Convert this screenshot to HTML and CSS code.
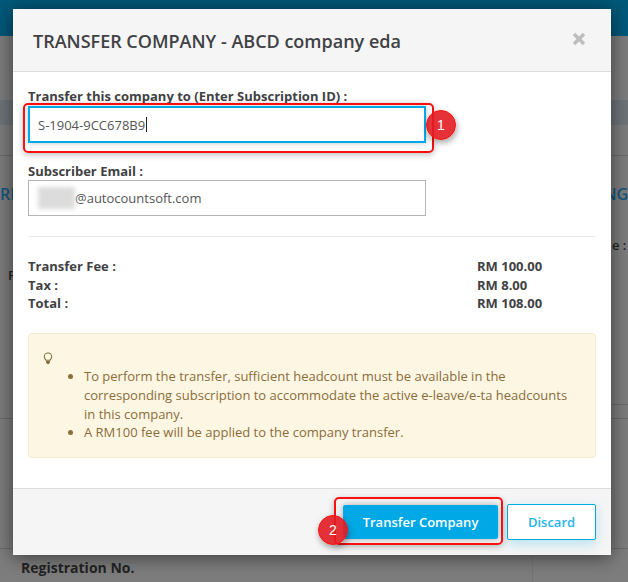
FILE: index.html
```html
<!DOCTYPE html>
<html lang="en">
<head>
  <meta charset="utf-8" />
  <title>Transfer Company</title>
  <link rel="stylesheet" href="styles.css">
</head>
<body>
  <div id="page">
    <div id="top_bar"></div>
    <div id="band"></div>
    <div id="rule1"></div>
    <span id="bg_r">RI</span>
    <span id="bg_ng">NG</span>
    <span id="bg_e">e :</span>
    <span id="bg_f">F</span>
    <div id="rule2"></div>
    <div id="rule2_right"></div>
    <div id="rule3"></div>
    <div id="col_line"></div>
    <span id="bg_reg">Registration No.</span>
  </div>

  <div id="modal">
    <header>
      <h1>TRANSFER COMPANY - ABCD company eda</h1>
      <svg id="close" width="14" height="14" viewBox="0 0 14 14"><path d="M2 2l10 10M12 2L2 12" stroke="#bdbdbd" stroke-width="3.4" /></svg>
    </header>

    <div id="modal-body">
      <label class="field-label">Transfer this company to (Enter Subscription ID) :</label>
      <div class="input focus">S-1904-9CC678B9<i class="caret"></i></div>

      <label class="field-label second">Subscriber Email :</label>
      <div class="input"><span class="blur"></span>@autocountsoft.com</div>

      <hr />

      <div class="fee"><b>Transfer Fee :</b><b class="amount">RM 100.00</b></div>
      <div class="fee"><b>Tax :</b><b class="amount">RM 8.00</b></div>
      <div class="fee"><b>Total :</b><b class="amount">RM 108.00</b></div>

      <div class="note">
        <svg class="bulb" width="10" height="13" viewBox="0 0 10 13">
          <path d="M5 1a3.7 3.7 0 0 0-3.7 3.7c0 1.5 1 2.3 1.6 3.5h4.2c.6-1.2 1.6-2 1.6-3.5A3.7 3.7 0 0 0 5 1z" fill="#fff8e6" stroke="#8a6d3b" stroke-width="1.1" />
          <path d="M3.1 9h3.8v1.6l-1 1.4H4.1l-1-1.4z" fill="#8a6d3b" />
        </svg>
        <ul>
          <li>To perform the transfer, sufficient headcount must be available in the corresponding subscription to accommodate the active e-leave/e-ta headcounts in this company.</li>
          <li>A RM100 fee will be applied to the company transfer.</li>
        </ul>
      </div>
    </div>

    <footer>
      <button class="btn primary">Transfer Company</button>
      <button class="btn outline">Discard</button>
    </footer>
  </div>

  <div class="callout" id="callout1"></div>
  <div class="callout" id="callout2"></div>
  <div class="badge" id="badge1">1</div>
  <div class="badge" id="badge2">2</div>
</body>
</html>
```

FILE: styles.css
```css
html, body { margin: 0; padding: 0; height: 582px; overflow: hidden; font-family: "Open Sans", "Noto Sans", sans-serif; font-size: 13px; color: #3f3f3f; }
body { background: #7d7d7d; position: relative; }
h1 { margin: 0; font-size: 18px; font-weight: 600; line-height: 24px; color: #3f4144; }
b { font-weight: 700; }

/* page behind the overlay */
#page { height: 582px; display: flex; flex-direction: column; }
#top_bar { height: 36px; background: #00597a; }
#band { height: 25px; margin-top: 64px; background: #6f7479; }
#rule1 { height: 1px; margin-top: 30px; background: #6b6b6b; }
#rule2 { height: 1px; margin-top: 262px; background: #6b6b6b; }
#rule3 { height: 1px; margin-top: 129px; background: #6b6b6b; }
#rule2_right { position: absolute; left: 611px; top: 404px; width: 17px; height: 1px; background: #6b6b6b; }
#col_line { position: absolute; left: 532px; top: 548px; width: 1px; height: 34px; background: #757575; }
#bg_r, #bg_ng, #bg_e, #bg_f, #bg_reg { position: absolute; font-weight: 600; }
#bg_r { left: 0; top: 183px; font-size: 16px; color: #14577f; }
#bg_ng { left: 604px; top: 183px; font-size: 16px; color: #14577f; }
#bg_e { left: 612px; top: 236px; color: #222; }
#bg_f { left: 8px; top: 266px; color: #222; }
#bg_reg { left: 21px; top: 558px; font-size: 14px; font-weight: 700; line-height: 20px; color: #232323; }

/* dialog */
#modal { position: absolute; left: 13px; top: 9px; width: 598px; height: 546px; background: #fff; display: flex; flex-direction: column; box-shadow: 0 2px 18px rgba(0,0,0,.55); }
#modal header { height: 63px; box-sizing: border-box; background: #f5f5f5; border-bottom: 1px solid #dcdcdc; padding: 2px 25px 0 20px; display: flex; align-items: center; justify-content: space-between; }
#close { margin-top: -5px; }
#modal-body { flex: 1; padding: 15px 15px 0; }
.field-label { display: block; font-weight: 700; line-height: 18px; color: #3f4144; }
.field-label.second { margin-top: 19px; }
.input { width: 398px; height: 36px; box-sizing: border-box; border: 1px solid #b5b5b5; padding-left: 9px; color: #555; display: flex; align-items: center; }
.input.focus { height: 37px; margin-top: 1px; border: 2px solid #00a9e6; padding-left: 8px; box-shadow: 0 0 6px rgba(0,0,0,.25); }
.caret { width: 1px; height: 15px; background: #222; margin-left: 1px; }
.blur { width: 37px; height: 22px; background: #dcdcdc; filter: blur(2px); }
hr { border: 0; border-top: 1px solid #eaeaea; margin: 20px 0; }
.fee { display: flex; line-height: 18.5px; color: #3f4144; }
.fee b:first-child { width: 449px; }
.note { margin-top: 20.5px; height: 125px; box-sizing: border-box; background: #fdf6e3; border: 1px solid #f8ebcb; border-radius: 4px; padding: 18px 14px 0; color: #8a6d3b; }
.bulb { display: block; }
.note ul { margin: 2px 0 0; padding-left: 41px; }
.note li { line-height: 18.8px; }

#modal footer { height: 67px; box-sizing: border-box; background: #f5f5f5; border-top: 1px solid #dcdcdc; padding: 15px 15px 0 0; display: flex; justify-content: flex-end; align-items: flex-start; gap: 9px; }
.btn { box-sizing: border-box; font-family: inherit; font-size: 13px; font-weight: 600; border-radius: 2px; padding: 0; }
.primary { width: 155px; height: 34px; margin-top: 1px; background: #00a9e6; border: 0; color: #fff; box-shadow: 0 0 7px rgba(0,0,0,.3); }
.outline { width: 89px; height: 36px; background: #fff; border: 1px solid #00a9e6; color: #22b5ee; box-shadow: 0 4px 12px rgba(0,169,230,.25); }

/* annotations drawn on the screenshot */
.callout { position: absolute; box-sizing: border-box; border: 2px solid #fb1010; border-radius: 5px; box-shadow: 0 2px 6px rgba(0,0,0,.25); }
#callout1 { left: 23px; top: 103px; width: 411px; height: 50px; }
#callout2 { left: 334px; top: 497px; width: 169px; height: 48px; }
.badge { position: absolute; width: 30px; height: 30px; border-radius: 50%; background: rgba(226,28,34,.9); border: 1px solid #fb1010; box-sizing: border-box; color: #fff; font-family: "Liberation Sans", sans-serif; font-size: 14px; line-height: 28px; text-align: center; box-shadow: 1px 3px 6px rgba(0,0,0,.35); }
#badge1 { left: 426px; top: 110px; }
#badge2 { left: 318px; top: 515px; }
```
